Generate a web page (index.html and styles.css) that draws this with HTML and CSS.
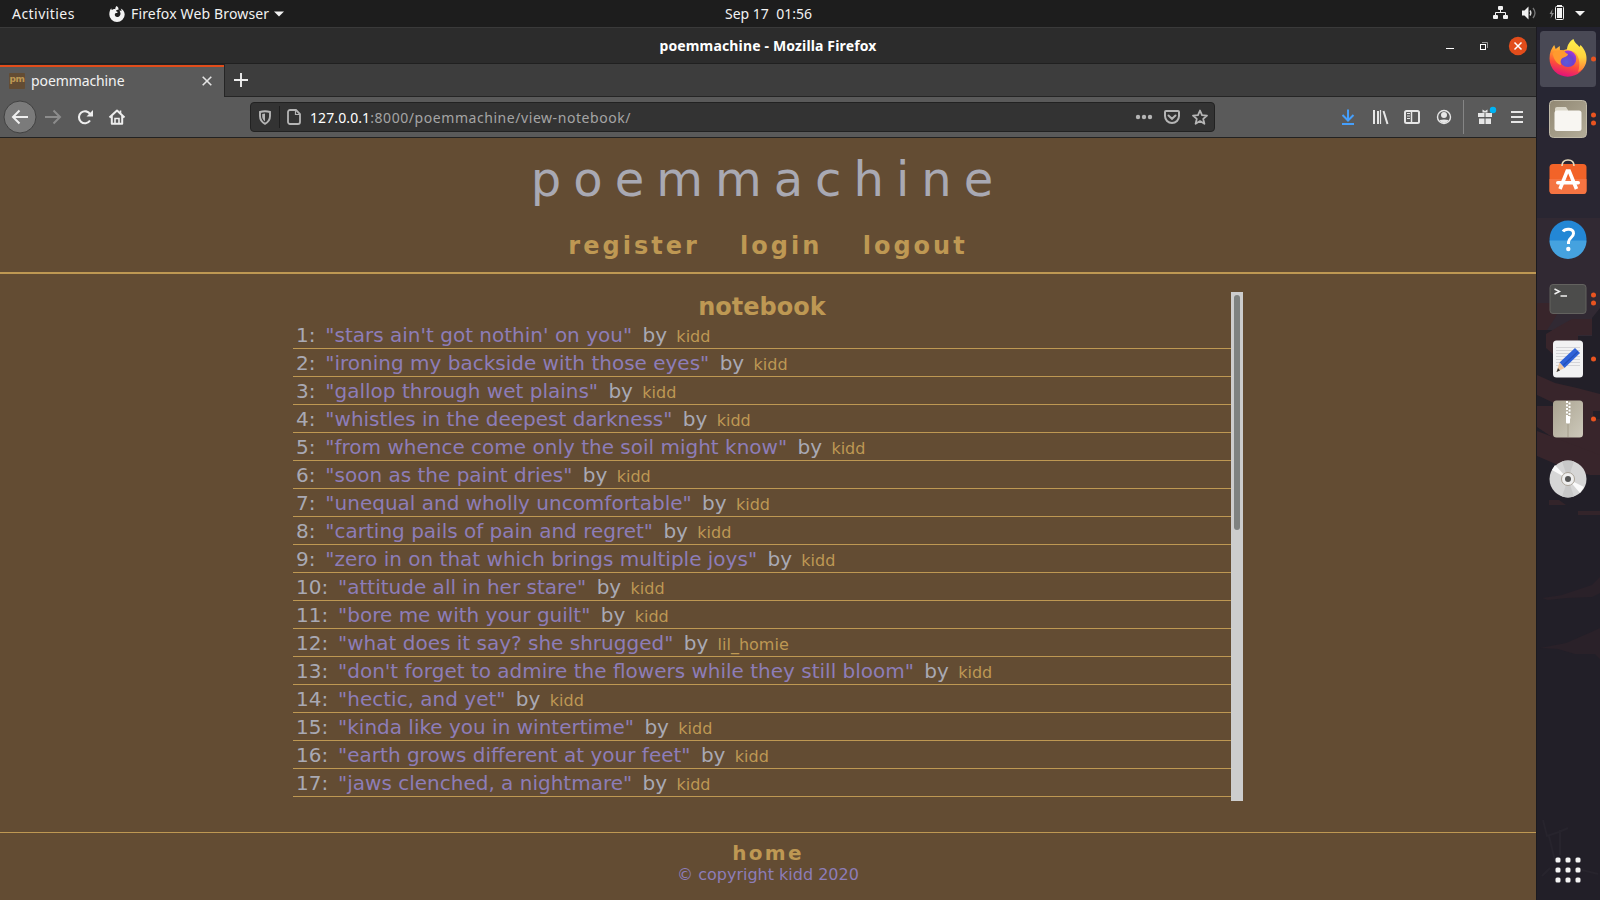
FILE: index.html
```html
<!DOCTYPE html>
<html lang="en">
<head>
<meta charset="utf-8">
<title>poemmachine</title>
<link rel="stylesheet" href="styles.css">
</head>
<body>
<header class="panel">
  <div class="panel-left">
    <span class="activities">Activities</span>
    <svg class="ff-mono" width="16" height="16" viewBox="0 0 16 16"><path d="M7.500 0c1.500.8 2.300 2.200 2 3.800-.9-.3-1.900 0-2.400.8-.2 1 .8 1.200 1.800 1.400-.4 1.100-1.500 1-2.500 1.300C5.200 8.600 6 10.900 8 11c2.600 0 4.200-2.300 3.200-4.800L10.500 4.500c.8-.2 1.500.2 2 .8 0-1.200-.2-2-.8-2.900 2.500 1.200 4 3.400 4 6A7.700 7.500 0 0 1 .3 8.400C.3 6 1 3.600 2.300 2.200c0 .9.2 1.300.7 1.800C4 3 5.300 2.800 6.300 3.200 6.200 2 6.700.8 7.500 0z" fill="#f2f2f2"/></svg>
    <span class="app-name">Firefox Web Browser</span>
    <svg width="10" height="6" viewBox="0 0 10 6"><path d="M0 .5h10L5 5.500z" fill="#f2f2f2"/></svg>
  </div>
  <div class="clock">Sep 17&nbsp; 01:56</div>
  <svg class="tray" width="100" height="27" viewBox="1490 0 100 27" fill="#f2f2f2">
    <rect x="1498" y="6" width="5" height="4" rx="1"/><rect x="1493" y="15" width="5" height="4" rx="1"/><rect x="1503" y="15" width="5" height="4" rx="1"/>
    <path d="M1500.500 9v4M1495.500 15v-2.500h10V15" fill="none" stroke="#f2f2f2"/>
    <path d="M1522 10.500h2.500l4-4v13l-4-4H1522z"/>
    <path d="M1530 10.500q1.800 2.500 0 5" fill="none" stroke="#ddd" stroke-width="1.300"/><path d="M1533 8q4 5 0 10" fill="none" stroke="#777" stroke-width="1.300"/>
    <path d="M1552.500 9l-3 5h2l-1 4.500 3.500-5.500h-2z" fill="#888"/>
    <rect x="1555.500" y="6.500" width="8" height="13" rx="1" fill="none" stroke="#f2f2f2"/><rect x="1557" y="5" width="5" height="2"/><rect x="1557" y="8" width="5" height="10"/>
    <path d="M1575 11h10l-5 5z"/>
  </svg>
</header>

<div class="desktop">
<main class="window">
  <div class="titlebar">
    <span class="win-title">poemmachine - Mozilla Firefox</span>
    <svg class="win-buttons" width="90" height="30" viewBox="1441 30 90 30">
      <path d="M1446 47.500h8" stroke="#fff"/>
      <rect x="1480.500" y="43.500" width="5" height="5" fill="none" stroke="#fff"/><path d="M1482 41.500h5.500v5.500" fill="none" stroke="#999"/>
      <circle cx="1518" cy="45" r="9.200" fill="#e24d1b"/><path d="M1514.500 41.500l7 7m0-7l-7 7" stroke="#fff" stroke-width="1.500"/>
    </svg>
  </div>
  <div class="tabs">
    <div class="tab">
      <span class="favicon">pm</span><span class="tab-name">poemmachine</span>
      <svg width="10" height="10" viewBox="0 0 10 10"><path d="M.7.7l8.600 8.600m0-8.600L.7 9.300" stroke="#e4e4e4" stroke-width="1.600"/></svg>
    </div>
    <div class="newtab"><svg width="14" height="14" viewBox="0 0 14 14"><path d="M7 0v14M0 7h14" stroke="#eee" stroke-width="1.900"/></svg></div>
  </div>
  <div class="toolbar">
    <svg class="nav-icons" width="140" height="40" viewBox="0 97 140 40" fill="none">
      <circle cx="20" cy="117" r="16" fill="#7b7b7b" stroke="#414141"/>
      <path d="M28 117H13M19.500 110.500L13 117l6.500 6.500" stroke="#efefef" stroke-width="2"/>
      <path d="M45 117h15M53.500 110.500L60 117l-6.500 6.500" stroke="#8c8c8c" stroke-width="2"/>
      <path d="M90.200 114.300A6 6 0 1 0 90 120.500" stroke="#eee" stroke-width="2.100"/><path d="M93 110v6.500h-6.500z" fill="#eee"/>
      <path d="M109.500 117.500l7.500-7 7.500 7M111.800 116v7.700h10.400V116" stroke="#eee" stroke-width="2" stroke-linejoin="round"/><path d="M115 124v-5.500h4v5.500M120.500 110.500v3" stroke="#eee" stroke-width="1.600"/>
    </svg>
    <div class="urlbar">
      <svg width="28" height="28" viewBox="251 103 28 28" fill="none">
        <path d="M265 111.200c2 0 3.500.3 5 .8v4c0 4-1.800 6.200-5 7.800-3.200-1.600-5-3.800-5-7.800v-4c1.500-.5 3-.8 5-.8z" stroke="#b5b5b5" stroke-width="1.900"/><path d="M265 113.500v8c-1.700-1.200-2.800-2.800-2.800-5v-2.600z" fill="#b5b5b5"/>
      </svg>
      <i class="url-sep"></i>
      <svg class="doc" width="14" height="16" viewBox="0 0 14 16" fill="none" stroke="#b5b5b5" stroke-width="1.800"><path d="M3 1h6l4 4v8a2 2 0 0 1-2 2H3a2 2 0 0 1-2-2V3a2 2 0 0 1 2-2z"/><path d="M8.500 1v4.500H13" stroke-width="1.200"/></svg>
      <span class="url"><b>127.0.0.1</b>:8000/poemmachine/view-notebook/</span>
      <svg class="url-icons" width="74" height="24" viewBox="1135 105 74 24" fill="none" stroke="#b5b5b5" stroke-width="2">
        <g fill="#b5b5b5" stroke="none"><circle cx="1138" cy="117" r="2.200"/><circle cx="1144" cy="117" r="2.200"/><circle cx="1150" cy="117" r="2.200"/></g>
        <path d="M1166 111h12q1 0 1 1v4a7 7 0 0 1-14 0v-4q0-1 1-1z"/><path d="M1168.500 115.500l3.500 3.300 3.500-3.300" stroke-linecap="round"/>
        <path d="M1200 110.500l2 4.700 5 .4-3.800 3.300 1.200 4.900-4.400-2.700-4.400 2.700 1.200-4.900-3.800-3.300 5-.4z" stroke-width="1.800" stroke-linejoin="round"/>
      </svg>
    </div>
    <svg class="tool-icons" width="196" height="40" viewBox="1336 97 196 40" fill="none" stroke="#e6e6e6">
      <path d="M1348 109.500v10M1342.500 115l5.500 5.500 5.500-5.500M1342 124h12" stroke="#459ffc" stroke-width="2"/>
      <path d="M1374 110v14M1378 111v13M1383.500 111l4 13" stroke-width="2"/><path d="M1380.500 110v14" stroke-width="1.200"/>
      <rect x="1405" y="111" width="14" height="12" rx="1.500" stroke-width="2"/><path d="M1411.500 111v12" stroke-width="1.500"/><path d="M1407 113.500h3M1407 116h3M1407 118.500h3" stroke-width="1"/>
      <circle cx="1444" cy="117" r="6.500" stroke-width="1.400"/><circle cx="1444" cy="115" r="3" fill="#e6e6e6" stroke="none"/><path d="M1439.500 120q4.500-1 9 0-1.500 3-4.500 3t-4.500-3z" fill="#e6e6e6" stroke="none"/>
      <path d="M1463.500 100v34" stroke="#858585"/>
      <g fill="#e6e6e6" stroke="none"><path d="M1478 113h6.500v4h-6.500zM1485.500 113h6.500v4h-6.500zM1479 118.500h5.500v5.500h-5.500zM1485.500 118.500h5.500v5.500h-5.500z"/><path d="M1482.500 109.500l2.500 1.500 2.500-1.500v3h-5z"/></g>
      <circle cx="1493" cy="110" r="3.200" fill="#00b3f4" stroke="none"/>
      <path d="M1511 112h12M1511 117h12M1511 122h12" stroke-width="2"/>
    </svg>
  </div>

  <div class="page">
    <div class="site-head">
      <h1>poemmachine</h1>
      <nav><a>register</a> <a>login</a> <a>logout</a></nav>
    </div>
    <div class="notebook">
      <section class="list">
        <h2>notebook</h2>
        <div class="row">1: <q>stars ain't got nothin' on you</q> by <small>kidd</small></div>
        <div class="row">2: <q>ironing my backside with those eyes</q> by <small>kidd</small></div>
        <div class="row">3: <q>gallop through wet plains</q> by <small>kidd</small></div>
        <div class="row">4: <q>whistles in the deepest darkness</q> by <small>kidd</small></div>
        <div class="row">5: <q>from whence come only the soil might know</q> by <small>kidd</small></div>
        <div class="row">6: <q>soon as the paint dries</q> by <small>kidd</small></div>
        <div class="row">7: <q>unequal and wholly uncomfortable</q> by <small>kidd</small></div>
        <div class="row">8: <q>carting pails of pain and regret</q> by <small>kidd</small></div>
        <div class="row">9: <q>zero in on that which brings multiple joys</q> by <small>kidd</small></div>
        <div class="row">10: <q>attitude all in her stare</q> by <small>kidd</small></div>
        <div class="row">11: <q>bore me with your guilt</q> by <small>kidd</small></div>
        <div class="row">12: <q>what does it say? she shrugged</q> by <small>lil_homie</small></div>
        <div class="row">13: <q>don't forget to admire the flowers while they still bloom</q> by <small>kidd</small></div>
        <div class="row">14: <q>hectic, and yet</q> by <small>kidd</small></div>
        <div class="row">15: <q>kinda like you in wintertime</q> by <small>kidd</small></div>
        <div class="row">16: <q>earth grows different at your feet</q> by <small>kidd</small></div>
        <div class="row">17: <q>jaws clenched, a nightmare</q> by <small>kidd</small></div>
      </section>
      <div class="scroll"><div class="thumb"></div></div>
    </div>
    <footer>
      <a class="home">home</a>
      <div class="copy">© copyright kidd 2020</div>
    </footer>
  </div>
</main>

<aside class="dock">
  <svg width="64" height="873" viewBox="1536 27 64 873">
    <defs>
      <linearGradient id="fx" x1=".75" y1="0" x2=".45" y2="1"><stop offset="0" stop-color="#ffe04a"/><stop offset=".35" stop-color="#ff9a2e"/><stop offset=".65" stop-color="#ff5038"/><stop offset="1" stop-color="#e3127a"/></linearGradient>
      <radialGradient id="globe" cx=".4" cy=".7" r=".8"><stop offset="0" stop-color="#5a5cd8"/><stop offset=".55" stop-color="#7040cc"/><stop offset="1" stop-color="#b833e1"/></radialGradient>
      <linearGradient id="yel" x1=".4" y1="0" x2=".4" y2="1"><stop offset="0" stop-color="#fff04c"/><stop offset=".55" stop-color="#ffd23e"/><stop offset="1" stop-color="#ff7a35"/></linearGradient>
      <linearGradient id="tan" x1="0" y1="0" x2="1" y2="1"><stop offset="0" stop-color="#918873"/><stop offset="1" stop-color="#b3ad99"/></linearGradient>
      <linearGradient id="zip" x1="0" y1="0" x2="1" y2="1"><stop offset="0" stop-color="#aaa390"/><stop offset="1" stop-color="#cdc9bb"/></linearGradient>
    </defs>
    <rect x="1536" y="27" width="64" height="873" fill="#221f28"/>
    <path d="M1537 27h63v192h-63z" fill="#272633"/>
    <path d="M1537 27h63v13h-63z" fill="#23222f"/>
    <path d="M1537 128h63v90h-63z" fill="#292632"/>
    <path d="M1537 218h63v90l-8 10v18h-40v-6h-15z" fill="#312933"/>
    <path d="M1537 303h26l-8 15-8 12h-10zM1556 328l16-9h20v16h-14v20h-24l-8-7v-14z" fill="#38252b"/>
    <path d="M1537 375l18 8 22 5 23 6v17h-24l-20-7-19-9z" fill="#38252b"/>
    <path d="M1537 406h56v13h7v37l-22-6-20-9-21-14z" fill="#38252b"/>
    <path d="M1537 431l24 9 39 15v20h-10l-25-7-28-12z" fill="#38252b"/>
    <path d="M1549 500h10l7 5h-17zM1578 511h22v4h-22z" fill="#33242a"/>
    <path d="M1542 598l20-3 30-10 8-8v16l-8 4-25 1-19 2z" fill="#2a2129"/>
    <path d="M1540 648l26-5 23-10 11-5v31l-5-5h-20l-17-5z" fill="#2a2129"/>
    <path d="M1543 820l4 16 12-4 9-4M1549 836l6 25M1560 830v25M1550 868l-8 8M1582 870l16 4" fill="none" stroke="#27242d" stroke-width="2"/>
    <path d="M1536.500 27v873" stroke="#1b1a20"/>

    <rect x="1540" y="31" width="56" height="56" rx="3.500" fill="#494955"/>
    <path d="M1549.500 58.500c0-6 2-10 4.700-13.500l1.500 4 4-3 .3 4 3.500.5c3-2 7-2 10 0 3 1 8 3 12.500 8a18.200 18.200 0 1 1-36.500 0z" fill="url(#fx)"/>
    <path d="M1567 50c0-5 3-9 6.500-11 1 4 4 5 6 8l1-2c4 4 6.500 9 6 15-.5 6-4 10.500-8.500 12 3-9 1-19-6-21z" fill="url(#yel)"/>
    <circle cx="1568" cy="58.800" r="8.300" fill="url(#globe)"/>
    <path d="M1552.500 54c1-3 7-4.500 11.500-3.500 1 1.500 2 3 4 3.500 0 2.500-3.500 3-5.500 4-2 1.500-2.500 4-1.500 7-4.500-1-7-6-8.500-11z" fill="#ff9a2e"/>

    <rect x="1549.500" y="100.500" width="37" height="37" rx="4" fill="url(#tan)" stroke="#c0baa8"/>
    <path d="M1555 109q0-2 2-2h9l2 3v5h-13z" fill="#dcd8ca"/><rect x="1554.500" y="110.500" width="27" height="20.500" rx="2.500" fill="#f8f6f2"/>

    <rect x="1549.500" y="164" width="37" height="30" rx="3.500" fill="#f26328"/><path d="M1549.500 179h37v11.500a3.500 3.500 0 0 1-3.500 3.500h-30a3.500 3.500 0 0 1-3.500-3.500z" fill="#f57442"/>
    <path d="M1562 166c0-4 2.500-6 6-6s6 2 6 6" fill="none" stroke="#e9ddbd" stroke-width="1.600"/>
    <path d="M1560 189l7.200-18h2l7.300 18" fill="none" stroke="#fff" stroke-width="3.600"/><rect x="1556" y="181" width="24" height="3.600" rx="1.800" fill="#fff"/>

    <circle cx="1568" cy="239" r="18.500" fill="#2387d5"/><path d="M1549.500 240.500h37a18.500 18.500 0 0 1-37 0z" fill="#45a2df"/>
    <path d="M1563 231.500c2-3 10.500-3.500 10.500 2 0 4-5 4.500-5 8.500v2" fill="none" stroke="#fff" stroke-width="3"/><circle cx="1568.300" cy="249" r="2.200" fill="#fff"/>

    <rect x="1550" y="284.500" width="36" height="29" rx="3" fill="#4c4c4b" stroke="#63625f"/>
    <path d="M1554.500 289l5 2.500-5 2.500M1560.500 296h6.500" fill="none" stroke="#f0f0f0" stroke-width="1.400"/>

    <rect x="1553" y="340.500" width="30" height="37" rx="3.500" fill="#f2f2f3"/>
    <path d="M1556 347.500h24m-24 3h24m-24 3h24m-24 3h24m-24 3h24m-24 3h24m-24 3h24" stroke="#d5d5d8"/>
    <path d="M1559.500 362.500l15.500-14.500 5 5L1564.500 368z" fill="#2f62d8"/><path d="M1563 365.500l15-14" stroke="#2450ba" stroke-width="1.200"/><path d="M1559.500 362.500l5 5.500-8 4z" fill="#efc7a0"/><path d="M1556.500 372l1.500-4 2 2.500z" fill="#333"/>

    <rect x="1553" y="400.500" width="30" height="37" rx="3.500" fill="url(#zip)"/><path d="M1568 401v36" stroke="#a39c8a"/>
    <path d="M1567 401v17" stroke="#fff" stroke-width="2" stroke-dasharray="2 1.500"/><path d="M1569.500 402.500v16" stroke="#fff" stroke-width="2" stroke-dasharray="2 1.500"/><rect x="1566" y="416" width="4" height="7.500" rx="1" fill="#fff"/>

    <circle cx="1568" cy="479" r="18.500" fill="#d6d6d6"/><path d="M1568 479l-16-9 3-5zM1568 479l16 8-4 6z" fill="#fafafa"/><path d="M1568 479l-6-17.500a18.500 18.500 0 0 1 12 0zM1568 479l-6 17.500a18.500 18.500 0 0 0 12 0z" fill="#c8c8c8"/>
    <circle cx="1568" cy="479" r="6.500" fill="#efefef" stroke="#aaa398"/><circle cx="1568" cy="479" r="3" fill="#555"/>

    <g fill="#e95420"><circle cx="1593.500" cy="59" r="2.500"/><circle cx="1593.500" cy="115" r="2.500"/><circle cx="1593.500" cy="123" r="2.500"/><circle cx="1593.500" cy="295" r="2.500"/><circle cx="1593.500" cy="303" r="2.500"/><circle cx="1593.500" cy="359" r="2.500"/><circle cx="1593.500" cy="419" r="2.500"/></g>
    <g fill="#f3f3f3"><rect x="1555.500" y="857.500" width="5" height="5" rx="1.500"/><rect x="1565.500" y="857.500" width="5" height="5" rx="1.500"/><rect x="1575.500" y="857.500" width="5" height="5" rx="1.500"/><rect x="1555.500" y="867.500" width="5" height="5" rx="1.500"/><rect x="1565.500" y="867.500" width="5" height="5" rx="1.500"/><rect x="1575.500" y="867.500" width="5" height="5" rx="1.500"/><rect x="1555.500" y="877.500" width="5" height="5" rx="1.500"/><rect x="1565.500" y="877.500" width="5" height="5" rx="1.500"/><rect x="1575.500" y="877.500" width="5" height="5" rx="1.500"/></g>
  </svg>
</aside>
</div>
</body>
</html>
```
FILE: styles.css
```css
* { box-sizing: border-box; }
body { margin: 0; width: 1600px; height: 900px; overflow: hidden; background: #1d1d1d; font-family: "Noto Sans", sans-serif; font-size: 14px; color: #f2f2f2; }
svg { display: block; flex: none; }

.panel { height: 27px; background: #1d1d1d; display: grid; grid-template-columns: 725px 87px 1fr; align-items: center; line-height: 27px; white-space: nowrap; }
.panel-left { display: flex; align-items: center; padding-left: 12px; }
.activities { width: 97px; letter-spacing: .45px; }
.ff-mono { margin-right: 6px; }
.app-name { width: 143px; letter-spacing: .15px; }
.clock { line-height: 25px; }
.tray { justify-self: end; margin-right: 10px; }

.desktop { display: flex; height: 873px; }
.window { width: 1536px; display: flex; flex-direction: column; }
.titlebar { height: 37px; border-top: 1px solid #3a3a3a; border-bottom: 1px solid #202020; background: #2c2c2c; display: grid; grid-template-columns: 1fr auto 1fr; align-items: center; }
.win-title { grid-column: 2; font-weight: bold; letter-spacing: .15px; color: #fff; white-space: nowrap; }
.win-buttons { justify-self: end; margin-right: 5px; }
.tabs { height: 33px; background: #3d3d3d; display: flex; }
.tab { width: 225px; padding: 0 12px 0 9px; background: #5a5a5a; border-right: 1px solid #252525; display: flex; align-items: center; box-shadow: inset 0 1px #252525, inset 0 3px #e24d1b; }
.favicon { width: 16px; height: 16px; margin-right: 6px; border-radius: 1px; background: #634c33; color: #be9853; font: bold 9px/13px "DejaVu Sans", sans-serif; text-align: center; letter-spacing: -.4px; }
.tab-name { flex: 1; letter-spacing: -.1px; }
.newtab { flex: 1; padding: 9px; border-bottom: 1px solid #252525; }
.toolbar { height: 41px; background: #5a5a5a; border-bottom: 1px solid #222; display: flex; align-items: center; }
.urlbar { width: 965px; height: 30px; margin: 0 121px 0 110px; border: 1px solid #222; border-radius: 4px; background: #333; display: flex; align-items: center; }
.url-sep { width: 1px; height: 22px; background: #1f1f1f; }
.doc { margin: 0 9px 0 7px; }
.url { flex: 1; letter-spacing: .56px; color: #a5a5a5; white-space: nowrap; }
.url b { font-weight: normal; letter-spacing: .1px; color: #fff; }
.url-icons { margin-right: 5px; }

.page { flex: 1; background: #634c33; font-family: "DejaVu Sans", sans-serif; display: flex; flex-direction: column; }
.site-head { height: 136px; border-bottom: 2px solid #be9853; text-align: center; }
h1 { margin: 0; padding-top: 13px; height: 87px; font-size: 48px; font-weight: normal; line-height: 56px; letter-spacing: 12px; color: #a9a9b3; }
nav { font-size: 24px; font-weight: bold; line-height: 42px; letter-spacing: 3px; color: #be9853; }
nav a + a { margin-left: 29px; }
.notebook { width: 950px; height: 509px; margin: 18px auto 31px; display: flex; }
.list { flex: 1; overflow: hidden; color: #a9a9b3; }
h2 { margin: 0; height: 29px; font-size: 24px; line-height: 31px; text-align: center; color: #be9853; }
.row { height: 28px; padding-left: 3px; border-bottom: 1px solid #be9853; font-size: 20px; line-height: 29px; white-space: nowrap; }
q { color: #8d7db8; margin: 0 4px 0 3.500px; quotes: '"' '"'; }
small { font-size: 16px; color: #be9853; margin-left: 3px; }
.scroll { width: 12px; padding: 3px; background: #cdcdcd; }
.thumb { height: 235px; border-radius: 3px; background: #7f8280; }
footer { flex: 1; border-top: 1px solid #be9853; text-align: center; }
.home { display: block; padding-top: 9px; font-size: 20px; font-weight: bold; line-height: 23px; letter-spacing: 2.300px; color: #be9853; }
.copy { font-size: 16px; line-height: 19px; color: #8d7db8; }
```
